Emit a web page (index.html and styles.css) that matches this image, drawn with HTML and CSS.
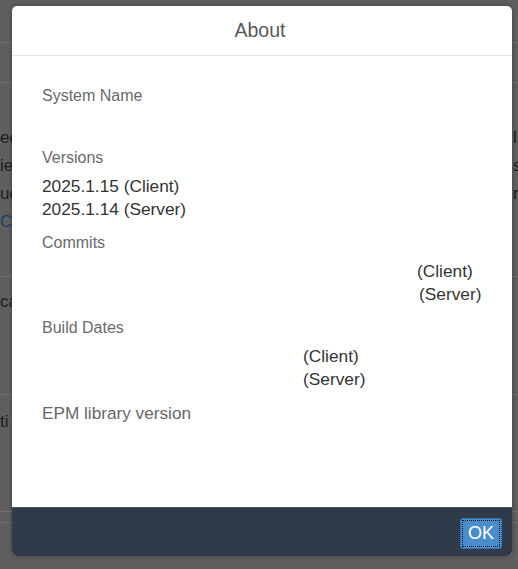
FILE: index.html
```html
<!DOCTYPE html>
<html lang="en">
<head>
	<meta charset="UTF-8">
	<title>About</title>
	<link rel="stylesheet" href="styles.css">
</head>
<body>
<div id="page">
	<div class="bar"></div>
	<div class="bar row2"></div>
	<div class="text-block">
		<div class="line"><span class="left">ec</span><span class="right">l</span></div>
		<div class="line"><span class="left">ie</span><span class="right">s</span></div>
		<div class="line"><span class="left">uc</span><span class="right">re</span></div>
		<div class="line"><span class="left link">Co</span><span class="right"></span></div>
	</div>
	<div class="section sec-ca"><span class="left">ca</span></div>
	<div class="section sec-ti"><span class="left">ti</span></div>
	<div class="bar row-last"></div>
	<div class="bar row-end"></div>
</div>

<div id="dialog">
	<div class="dialog-header">About</div>
	<div class="dialog-body">
		<div class="group">
			<div class="label">System Name</div>
			<div class="values">
				<div class="value"></div>
			</div>
		</div>
		<div class="group">
			<div class="label">Versions</div>
			<div class="values">
				<div class="value">2025.1.15 (Client)</div>
				<div class="value">2025.1.14 (Server)</div>
			</div>
		</div>
		<div class="group">
			<div class="label">Commits</div>
			<div class="values">
				<div class="value commit-client">(Client)</div>
				<div class="value commit-server">(Server)</div>
			</div>
		</div>
		<div class="group">
			<div class="label">Build Dates</div>
			<div class="values">
				<div class="value build-date">(Client)</div>
				<div class="value build-date">(Server)</div>
			</div>
		</div>
		<div class="group">
			<div class="epm">EPM library version</div>
		</div>
	</div>
	<div class="dialog-footer">
		<button class="btn-ok" type="button">OK</button>
	</div>
</div>
</body>
</html>
```

FILE: styles.css
```css
* {
	padding: 0;
	margin: 0;
	box-sizing: border-box;
}

body {
	width: 518px;
	height: 569px;
	overflow: hidden;
	background-color: #5f5f5f;
	font-family: "Liberation Sans", Arial, sans-serif;
	position: relative;
}

/* dimmed page behind the dialog */
#page {
	width: 100%;
	height: 100%;
	color: #1c1c1c;
	font-size: 17px;
}

.bar {
	height: 43px;
	border-bottom: 1px solid #6f6f6f;
}

.row2 {
	height: 40px;
}

.text-block {
	padding-top: 41px;
	height: 194px;
	border-bottom: 1px solid #6f6f6f;
}

.line {
	display: flex;
	justify-content: space-between;
	height: 28px;
	line-height: 28px;
	white-space: nowrap;
}

.left {
	display: block;
	white-space: nowrap;
}

.right {
	display: block;
	width: 5px;
	overflow: hidden;
	white-space: nowrap;
}

.link {
	color: #173f66;
}

.section {
	height: 118px;
	padding-top: 14px;
	line-height: 22px;
	border-bottom: 1px solid #6f6f6f;
}

.sec-ti {
	height: 117px;
	padding-top: 16px;
}

.row-last {
	height: 11px;
}

.row-end {
	height: 40px;
	border-bottom: none;
}

/* dialog */
#dialog {
	position: absolute;
	left: 12px;
	top: 6px;
	width: 500px;
	height: 550px;
	background-color: #fff;
	border-radius: 5px;
	overflow: hidden;
	display: flex;
	flex-direction: column;
	box-shadow: 0 0 4px rgba(0, 0, 0, .35);
}

.dialog-header {
	height: 50px;
	line-height: 49px;
	border-bottom: 1px solid #e6e6e6;
	text-align: center;
	font-size: 19.5px;
	color: #595959;
	padding-right: 4px;
}

.dialog-body {
	flex: 1;
	padding: 30px 30px 0;
}

.group {
	margin-bottom: 11px;
}

.label {
	font-size: 16px;
	line-height: 20px;
	color: #6a6a6a;
}

.values {
	margin-top: 7px;
}

.value {
	min-height: 23.5px;
	line-height: 23.5px;
	font-size: 17.3px;
	color: #333;
	white-space: nowrap;
}

.commit-client {
	padding-left: 375px;
}

.commit-server {
	padding-left: 377px;
}

.build-date {
	padding-left: 261px;
}

.epm {
	font-size: 17.2px;
	line-height: 20px;
	color: #666;
}

.dialog-footer {
	height: 49px;
	background-color: #2f3b48;
	border-top: 1px solid #46535f;
	display: flex;
	justify-content: flex-end;
	align-items: center;
	padding-right: 10px;
}

.btn-ok {
	width: 42px;
	height: 31px;
	background-color: #4a8dcc;
	border: 1px solid #3672b2;
	border-radius: 3px;
	color: #fff;
	font-family: "Liberation Sans", Arial, sans-serif;
	font-size: 18px;
	outline: 1px dotted #111;
	outline-offset: -3px;
	margin-top: 2px;
}
```
